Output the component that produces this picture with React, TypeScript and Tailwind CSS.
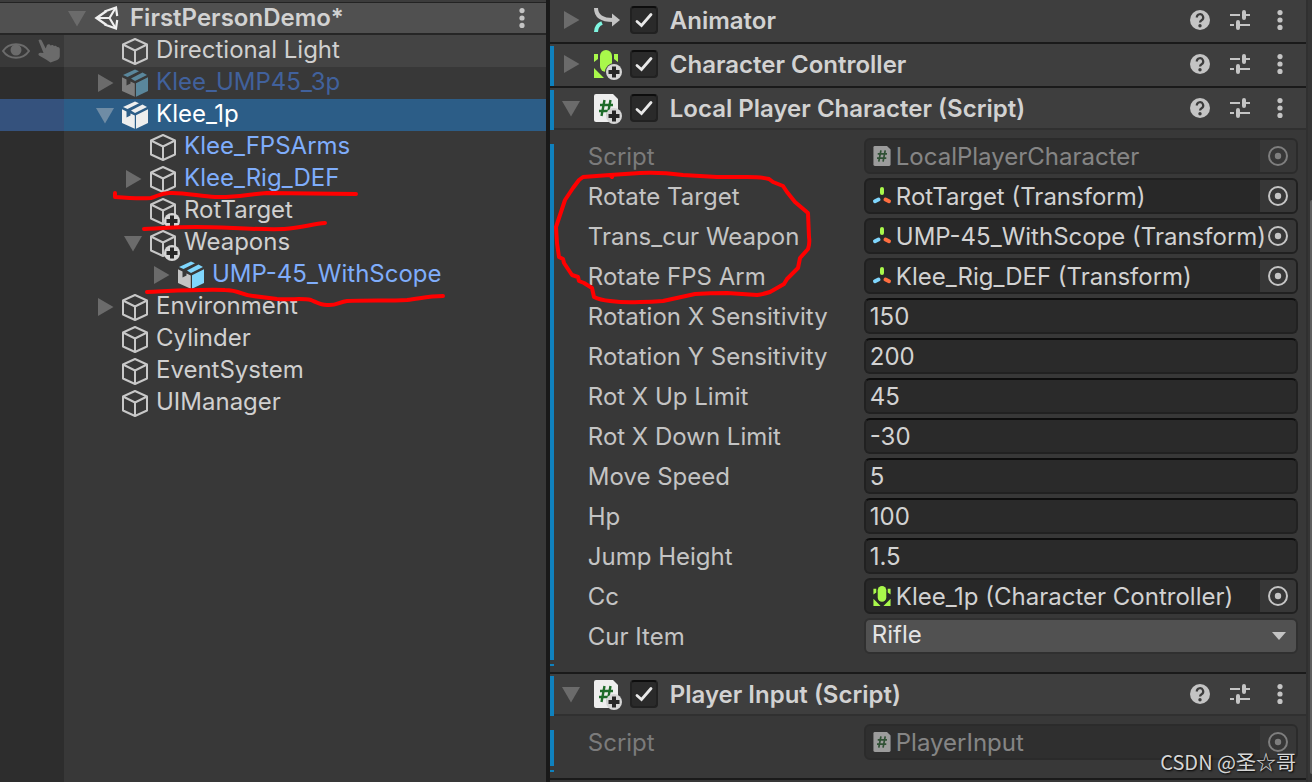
import React from 'react';
import clsx from 'clsx';

type IconKind = 'cube' | 'prefab' | 'prefabRoot' | 'prefabOff';

interface TreeItem {
  name: string;
  depth: 1 | 2 | 3;
  icon: IconKind;
  fold?: 'open' | 'closed';
  tone?: 'normal' | 'prefab' | 'disabled';
  added?: boolean;
  hovered?: boolean;
  selected?: boolean;
}

const TREE: TreeItem[] = [
  { name: 'Directional Light', depth: 1, icon: 'cube', hovered: true },
  { name: 'Klee_UMP45_3p', depth: 1, icon: 'prefabOff', fold: 'closed', tone: 'disabled' },
  { name: 'Klee_1p', depth: 1, icon: 'prefabRoot', fold: 'open', selected: true },
  { name: 'Klee_FPSArms', depth: 2, icon: 'cube', tone: 'prefab' },
  { name: 'Klee_Rig_DEF', depth: 2, icon: 'cube', fold: 'closed', tone: 'prefab' },
  { name: 'RotTarget', depth: 2, icon: 'cube', added: true },
  { name: 'Weapons', depth: 2, icon: 'cube', fold: 'open', added: true },
  { name: 'UMP-45_WithScope', depth: 3, icon: 'prefab', fold: 'closed', tone: 'prefab' },
  { name: 'Environment', depth: 1, icon: 'cube', fold: 'closed' },
  { name: 'Cylinder', depth: 1, icon: 'cube' },
  { name: 'EventSystem', depth: 1, icon: 'cube' },
  { name: 'UIManager', depth: 1, icon: 'cube' },
];

const INDENT = { 1: 'pl-7', 2: 'pl-14', 3: 'pl-21' };

const PREFAB_COLORS = {
  prefab: { side: '#c4c4c4', face: '#7fd6fd' },
  prefabRoot: { side: '#eeeeee', face: '#eeeeee' },
  prefabOff: { side: '#7e7e7e', face: '#5a879c' },
};

interface FieldDef {
  label: string;
  value: string;
  kind: 'number' | 'object' | 'enum';
  icon?: React.ReactNode;
  disabled?: boolean;
}

/* ---------- icons ---------- */

function AddedBadge() {
  return (
    <g>
      <circle cx="24" cy="24" r="8" fill="#d6d6d6" />
      <path d="M24 18.5v11M18.5 24h11" stroke="#262626" strokeWidth="4" />
    </g>
  );
}

function CubeIcon({ added }: { added?: boolean }) {
  return (
    <svg viewBox="0 0 28 28" className="size-7 overflow-visible" fill="none" aria-hidden="true">
      <path
        d="M15 2 27 7.5v14L15 27 3 21.5v-14ZM3 7.5l12 6 12-6M15 13.5V27"
        stroke="#c8c8c8"
        strokeWidth="2"
        strokeLinejoin="round"
      />
      {added && <AddedBadge />}
    </svg>
  );
}

function PrefabIcon({ kind }: { kind: 'prefab' | 'prefabRoot' | 'prefabOff' }) {
  const { side, face } = PREFAB_COLORS[kind];
  return (
    <svg viewBox="0 0 28 28" className="size-7" aria-hidden="true">
      <path d="M3 6 15 .5l4 1.8L7.5 8Z" fill={face} />
      <path d="M11 9.5 22.5 3.6 27 6l-12 6Z" fill={face} />
      <path d="M2 8.2l4.5 2.3v6l4-2v-2l4.3 1.9v13.3L2 22Z" fill={side} />
      <path d="M16 14.2 28 8.2V22L16 27.8Z" fill={face} />
    </svg>
  );
}

function UnityIcon() {
  return (
    <svg viewBox="0 0 28 28" className="size-7 overflow-visible" fill="none" stroke="#f0f0f0" aria-hidden="true">
      <path d="M14.500 7 4.500 14l10 7" strokeWidth="2.400" />
      <path d="M4.500 14h13M17.500 14l6-10M17.500 14l6 10" strokeWidth="2.200" />
      <path d="M12.500 7.500 24 3.500l1.200 8.500M12.500 20.500 24 24.500l1.200-8.500" strokeWidth="2.200" />
    </svg>
  );
}

function Triangle({ open, light }: { open: boolean; light?: boolean }) {
  return (
    <svg
      viewBox="0 0 28 28"
      className={clsx('size-7', light ? 'fill-[#6f8ca5]' : 'fill-[#6b6b6b]')}
      aria-hidden="true"
    >
      {open ? <path d="M4 7h18l-9 15.500Z" /> : <path d="M6 5v18l15.500-9Z" />}
    </svg>
  );
}

function KebabIcon() {
  return (
    <svg viewBox="0 0 20 20" className="size-5" fill="#c4c4c4" aria-hidden="true">
      <circle cx="10" cy="2.600" r="2.600" />
      <circle cx="10" cy="10" r="2.600" />
      <circle cx="10" cy="17.400" r="2.600" />
    </svg>
  );
}

function HelpIcon() {
  return (
    <svg viewBox="0 0 20 20" className="size-5" aria-hidden="true">
      <circle cx="10" cy="10" r="10" fill="#c4c4c4" />
      <path d="M6.800 7.500a3.200 3.200 0 1 1 4.800 2.700c-1.100.7-1.600 1.100-1.600 2.300" fill="none" stroke="#3c3c3c" strokeWidth="2.200" />
      <circle cx="10" cy="15.700" r="1.700" fill="#3c3c3c" />
    </svg>
  );
}

function PresetIcon() {
  return (
    <svg viewBox="0 0 20 20" className="size-5" stroke="#c4c4c4" fill="none" aria-hidden="true">
      <path d="M0 5h10M17 5h3M0 15h4M10 15h10" strokeWidth="2" />
      <path d="M14 2v6M8 12v6" strokeWidth="4" strokeLinecap="round" />
      <path d="M14 5h3M8 15h3" strokeWidth="2" />
    </svg>
  );
}

function AnimatorIcon() {
  return (
    <svg viewBox="0 0 28 28" className="size-7" fill="none" aria-hidden="true">
      <path d="M2 2c0 8 6 12 17 12" stroke="#c4c4c4" strokeWidth="4" />
      <path d="M18 7.500 26 14l-8 6.500Z" fill="#c4c4c4" />
      <path d="M2 26c0-4.500 2-7.500 6-9" stroke="#7ff5e0" strokeWidth="4" />
    </svg>
  );
}

function CapsuleShape() {
  return (
    <g fill="#a9f84b">
      <rect x="6" y="0" width="12" height="22" rx="6" />
      <path d="M0 4h4v5l-4 3ZM24 4h-4v5l4 3ZM0 18l10 10H0ZM24 18 14 28h10Z" />
    </g>
  );
}

function CharacterControllerIcon() {
  return (
    <svg viewBox="0 0 28 28" className="size-7 overflow-visible" aria-hidden="true">
      <CapsuleShape />
      <circle cx="20" cy="22" r="9" fill="#3e3e3e" />
      <circle cx="20" cy="22" r="8" fill="#d6d6d6" />
      <path d="M20 16.500v11M14.500 22h11" stroke="#262626" strokeWidth="4" />
    </svg>
  );
}

function ScriptShape({ paper, ink }: { paper: string; ink: string }) {
  return (
    <g>
      <path d="M2 0h17l5 5v21a2 2 0 0 1-2 2H2a2 2 0 0 1-2-2V2a2 2 0 0 1 2-2Z" fill={paper} />
      <path d="M10.500 6 7.500 22M16.500 6l-3 16M6 11h13M5 17h13" stroke={ink} strokeWidth="2.400" fill="none" />
    </g>
  );
}

function ScriptHeaderIcon() {
  return (
    <svg viewBox="0 0 28 28" className="size-7 overflow-visible" aria-hidden="true">
      <ScriptShape paper="#eeeeee" ink="#1e6b2a" />
      <circle cx="20" cy="22" r="8" fill="#d6d6d6" />
      <path d="M20 16.500v11M14.500 22h11" stroke="#262626" strokeWidth="4" />
    </svg>
  );
}

function TransformIcon() {
  return (
    <svg viewBox="0 0 20 20" className="size-5" fill="none" strokeWidth="4" strokeLinecap="round" aria-hidden="true">
      <path d="M10 3v4" stroke="#a9f84b" />
      <path d="M6.500 13.500 3 15.200" stroke="#7fd6fd" />
      <path d="M13.500 13.500 17 15.200" stroke="#ff6e40" />
    </svg>
  );
}

const scriptIcon = (
  <svg viewBox="0 0 24 28" className="size-5" aria-hidden="true">
    <ScriptShape paper="#ffffff" ink="#2a6b33" />
  </svg>
);

const capsuleIcon = (
  <svg viewBox="0 0 24 28" className="size-5" aria-hidden="true">
    <CapsuleShape />
  </svg>
);

const LOCAL_PLAYER_FIELDS: FieldDef[] = [
  { label: 'Script', value: 'LocalPlayerCharacter', kind: 'object', icon: scriptIcon, disabled: true },
  { label: 'Rotate Target', value: 'RotTarget (Transform)', kind: 'object', icon: <TransformIcon /> },
  { label: 'Trans_cur Weapon', value: 'UMP-45_WithScope (Transform)', kind: 'object', icon: <TransformIcon /> },
  { label: 'Rotate FPS Arm', value: 'Klee_Rig_DEF (Transform)', kind: 'object', icon: <TransformIcon /> },
  { label: 'Rotation X Sensitivity', value: '150', kind: 'number' },
  { label: 'Rotation Y Sensitivity', value: '200', kind: 'number' },
  { label: 'Rot X Up Limit', value: '45', kind: 'number' },
  { label: 'Rot X Down Limit', value: '-30', kind: 'number' },
  { label: 'Move Speed', value: '5', kind: 'number' },
  { label: 'Hp', value: '100', kind: 'number' },
  { label: 'Jump Height', value: '1.5', kind: 'number' },
  { label: 'Cc', value: 'Klee_1p (Character Controller)', kind: 'object', icon: capsuleIcon },
  { label: 'Cur Item', value: 'Rifle', kind: 'enum' },
];

const PLAYER_INPUT_FIELDS: FieldDef[] = [
  { label: 'Script', value: 'PlayerInput', kind: 'object', icon: scriptIcon, disabled: true },
];

/* ---------- hierarchy ---------- */

function TreeRow({ item }: { item: TreeItem }) {
  return (
    <li className={clsx('flex h-8', item.selected ? 'bg-[#2c5d87]' : item.hovered && 'bg-[#444444]')}>
      <div
        className={clsx(
          'flex w-16 shrink-0 items-center gap-1.5',
          item.selected ? 'bg-[#35527d]' : item.hovered ? 'bg-[#393939]' : 'bg-[#2d2d2d]'
        )}
      >
        {item.hovered && (
          <>
            <button aria-label="Toggle visibility">
              <svg viewBox="0 0 32 28" className="h-7 w-8" aria-hidden="true">
                <path d="M3 14c6-9 20-9 26 0-6 9-20 9-26 0Z" fill="none" stroke="#6b6b6b" strokeWidth="2" />
                <circle cx="16" cy="13" r="5.500" fill="#6b6b6b" />
              </svg>
            </button>
            <button aria-label="Toggle picking">
              <svg viewBox="0 0 24 28" className="h-7 w-6" fill="#6b6b6b" aria-hidden="true">
                <path d="M.5 3.500C1 2 3 2 3.700 3.500l4 8 1.300-3.500c1-1.200 3-1 3.500.5 1-1 3-.8 3.500.7 1-.8 2.600-.4 3 1 1.500-.5 2.600.4 2.800 1.800V19c0 2-1 3-2.500 4L12.500 25.500 8 22.500 1 18.500c-1.200-1.200-.3-3 1.500-2.800l3 .3Z" />
              </svg>
            </button>
          </>
        )}
      </div>
      <div className={clsx('flex min-w-0 items-center', INDENT[item.depth])}>
        {item.fold ? (
          <button aria-label={`Toggle ${item.name}`}>
            <Triangle open={item.fold === 'open'} light={item.selected} />
          </button>
        ) : (
          <span className="w-7" />
        )}
        {item.icon === 'cube' ? <CubeIcon added={item.added} /> : <PrefabIcon kind={item.icon} />}
        <span
          className={clsx(
            'truncate pb-0.5 pl-2 text-2xl leading-7',
            item.selected && 'text-white',
            item.tone === 'prefab' && 'text-[#7fadfb]',
            item.tone === 'disabled' && 'text-[#41619c]',
            !item.selected && !item.tone && 'text-[#d0d0d0]'
          )}
        >
          {item.name}
        </span>
      </div>
    </li>
  );
}

function Hierarchy() {
  return (
    <section className="relative flex w-[41.6%] shrink-0 flex-col bg-[#383838]">
      <div className="h-[3px] border-b border-[#232323] bg-[#3c3c3c]" />
      <header className="flex h-8 items-center border-b-2 border-[#262626] bg-[#505050] pl-16">
        <button aria-label="Toggle scene">
          <Triangle open />
        </button>
        <UnityIcon />
        <h1 className="flex-1 pl-2.5 text-2xl leading-7 font-semibold text-[#d2d2d2] [font-optical-sizing:none]">
          FirstPersonDemo*
        </h1>
        <button className="mr-3.5" aria-label="Scene menu">
          <KebabIcon />
        </button>
      </header>
      <ul>
        {TREE.map((item) => (
          <TreeRow key={item.name} item={item} />
        ))}
      </ul>
      <div className="w-16 flex-1 bg-[#2d2d2d]" />

      {/* Marker strokes under the highlighted objects */}
      <svg
        viewBox="0 0 546 320"
        className="pointer-events-none absolute top-0 left-0 h-80 w-[546px]"
        fill="none"
        stroke="#ff0000"
        strokeWidth="4"
        strokeLinecap="round"
        strokeLinejoin="round"
        aria-hidden="true"
      >
        <path d="M115 193v4c12 1 24 2 36 1 7-2 10-5 18-5 13-1 30 3 46 4 20 1 34-3 52-4l89 1" />
        <path d="M144 229c20-1 35-2 52-2 28 0 60 3 88 2 18-1 28-5 41-6" />
        <path d="M147 292c24-1 54-3 78-2 15 0 18 6 28 6l24 3c14 1 25-1 34 1 7 3 10 5 16 5 9 1 12-3 20-4 20-1 42 0 60-1 12-1 20-4 36-4" />
      </svg>
    </section>
  );
}

/* ---------- inspector ---------- */

function PickerIcon() {
  return (
    <svg viewBox="0 0 20 20" className="size-5" fill="none" aria-hidden="true">
      <circle cx="10" cy="10" r="9" stroke="#c4c4c4" strokeWidth="2" />
      <circle cx="10" cy="10" r="3.200" fill="#c4c4c4" />
    </svg>
  );
}

function FieldControl({ field, id }: { field: FieldDef; id: string }) {
  if (field.kind === 'enum') {
    return (
      <div className="relative min-w-0 flex-1">
        <select
          id={id}
          className="block h-9 w-full appearance-none rounded-md border-2 border-[#303030] bg-[#515151] pb-0.5 pl-1.5 text-2xl leading-7 text-[#e4e4e4] outline-none"
        >
          <option>{field.value}</option>
        </select>
        <svg
          viewBox="0 0 14 8"
          className="pointer-events-none absolute top-3.5 right-3 h-2 w-3.5 fill-[#c4c4c4]"
          aria-hidden="true"
        >
          <path d="M0 0h14L7 8Z" />
        </svg>
      </div>
    );
  }

  if (field.kind === 'number') {
    return (
      <input
        id={id}
        defaultValue={field.value}
        className="h-9 min-w-0 flex-1 rounded-md border-2 border-[#212121] border-t-[#0d0d0d] bg-[#2a2a2a] pl-1 text-2xl leading-7 text-[#d2d2d2] outline-none"
      />
    );
  }

  return (
    <div
      className={clsx(
        'flex h-9 min-w-0 flex-1 items-center overflow-hidden rounded-md border-2 border-[#202020] bg-[#282828] pl-1.5',
        field.disabled && 'opacity-50'
      )}
    >
      <span className="shrink-0">{field.icon}</span>
      <input
        id={id}
        readOnly
        disabled={field.disabled}
        defaultValue={field.value}
        className="relative z-10 -mr-1 min-w-0 flex-1 pt-0.5 pl-1 text-2xl leading-7 text-[#d2d2d2] outline-none"
      />
      <button
        className="flex h-8 w-9 shrink-0 items-center justify-center bg-[#373737]"
        disabled={field.disabled}
        aria-label={`Pick ${field.label}`}
      >
        <PickerIcon />
      </button>
    </div>
  );
}

interface ComponentBlockProps {
  title: string;
  icon: React.ReactNode;
  fields?: FieldDef[];
  overridden?: boolean;
}

function ComponentBlock({ title, icon, fields, overridden }: ComponentBlockProps) {
  const slug = title.replace(/\W+/g, '-');

  return (
    <section className="border-b-2 border-[#1a1a1a]">
      <header
        className={clsx(
          'relative flex h-[42px] items-center gap-2 border-b-2 bg-[#3e3e3e] pr-1.5 pl-2',
          fields ? 'border-[#303030]' : 'border-[#3e3e3e]'
        )}
      >
        {overridden && <span className="absolute top-0.5 -bottom-0.5 left-0 w-1 bg-[#0f81be]" />}
        <button aria-label={`Toggle ${title}`}>
          <Triangle open={!!fields} />
        </button>
        {icon}
        <span className="relative size-7">
          <input
            id={`${slug}-on`}
            type="checkbox"
            defaultChecked
            className="peer block size-7 appearance-none rounded border-2 border-[#212121] border-t-[#0d0d0d] bg-[#2a2a2a]"
          />
          <svg
            viewBox="0 0 28 28"
            className="pointer-events-none absolute inset-0 hidden size-7 peer-checked:block"
            fill="none"
            aria-hidden="true"
          >
            <path d="M7 15.500 11.500 19.500 21 8.500" stroke="#e8e8e8" strokeWidth="2.800" strokeLinecap="round" />
          </svg>
        </span>
        <label
          htmlFor={`${slug}-on`}
          className="flex-1 truncate pt-0.5 pl-1 text-2xl leading-8 font-semibold text-[#d2d2d2] [font-optical-sizing:none]"
        >
          {title}
        </label>
        <div className="flex">
          <button className="flex w-10 justify-center" aria-label={`${title} help`}>
            <HelpIcon />
          </button>
          <button className="flex w-10 justify-center" aria-label={`${title} presets`}>
            <PresetIcon />
          </button>
          <button className="flex w-10 justify-center" aria-label={`${title} menu`}>
            <KebabIcon />
          </button>
        </div>
      </header>

      {fields && (
        <div className="relative flex flex-col gap-1 pt-2 pr-2 pb-[18px] pl-[38px]">
          <span className="absolute top-3.5 bottom-3 left-0 w-1 bg-[#0f81be]" />
          <span className="absolute bottom-1.5 left-0 h-0.5 w-1 bg-[#0f81be]" />
          {fields.map((field) => {
            const id = `${slug}-${field.label.replace(/\W+/g, '-')}`;
            return (
              <div key={field.label} className="flex items-center">
                <label
                  htmlFor={id}
                  className={clsx(
                    'w-[276px] shrink-0 pt-0.5 text-2xl leading-8',
                    field.disabled ? 'text-[#7b7b7b]' : 'text-[#c4c4c4]'
                  )}
                >
                  {field.label}
                </label>
                <FieldControl field={field} id={id} />
              </div>
            );
          })}
        </div>
      )}
    </section>
  );
}

function Inspector() {
  return (
    <main className="relative min-w-0 flex-1 bg-[#383838]">
      <ComponentBlock title="Animator" icon={<AnimatorIcon />} />
      <ComponentBlock title="Character Controller" icon={<CharacterControllerIcon />} overridden />
      <ComponentBlock
        title="Local Player Character (Script)"
        icon={<ScriptHeaderIcon />}
        fields={LOCAL_PLAYER_FIELDS}
        overridden
      />
      <ComponentBlock
        title="Player Input (Script)"
        icon={<ScriptHeaderIcon />}
        fields={PLAYER_INPUT_FIELDS}
        overridden
      />

      {/* Marker loop round the transform references */}
      <svg
        viewBox="0 0 280 320"
        className="pointer-events-none absolute top-0 left-0 h-80 w-[280px]"
        fill="none"
        stroke="#ff0000"
        strokeWidth="4"
        strokeLinecap="round"
        strokeLinejoin="round"
        aria-hidden="true"
      >
        <path d="M62 177L60 175L33 177L29 180L23 188L15 200L10 215L6 227L7 243L9 257L13 259L14 263L22 275L28 277L29 281L34 283L42 288L44 297Q50 300 60 301Q75 303 90 302Q102 302 113 301L145 294Q160 293 177 293L207 295Q214 294 220 292L234 284L237 279L248 268L250 258L258 249Q260 243 259 237L258 213L245 202L237 192L233 186L223 182L219 179Q213 177 197 177L167 177L133 175Q110 172 90 173L60 175" />
      </svg>
    </main>
  );
}

export default function App() {
  return (
    <div className="relative flex h-screen overflow-hidden bg-[#383838] font-['Inter','Noto_Sans_CJK_SC',sans-serif]">
      <Hierarchy />
      <div className="w-1 shrink-0 bg-[#191919]" />
      <Inspector />
      {/* Scrollbar track */}
      <div className="flex w-1.5 shrink-0 border-l-2 border-[#303030] bg-[#353535] pt-[200px] pl-0.5">
        <div className="mb-2 flex-1 self-stretch rounded-l bg-[#5f5f5f]" />
      </div>
      <p className="absolute right-4 bottom-1 font-['Noto_Sans_CJK_SC',sans-serif] text-xl leading-8 text-[#d6d6d6] [text-shadow:1px_1px_2px_#000]">
        CSDN @圣☆哥
      </p>
    </div>
  );
}
